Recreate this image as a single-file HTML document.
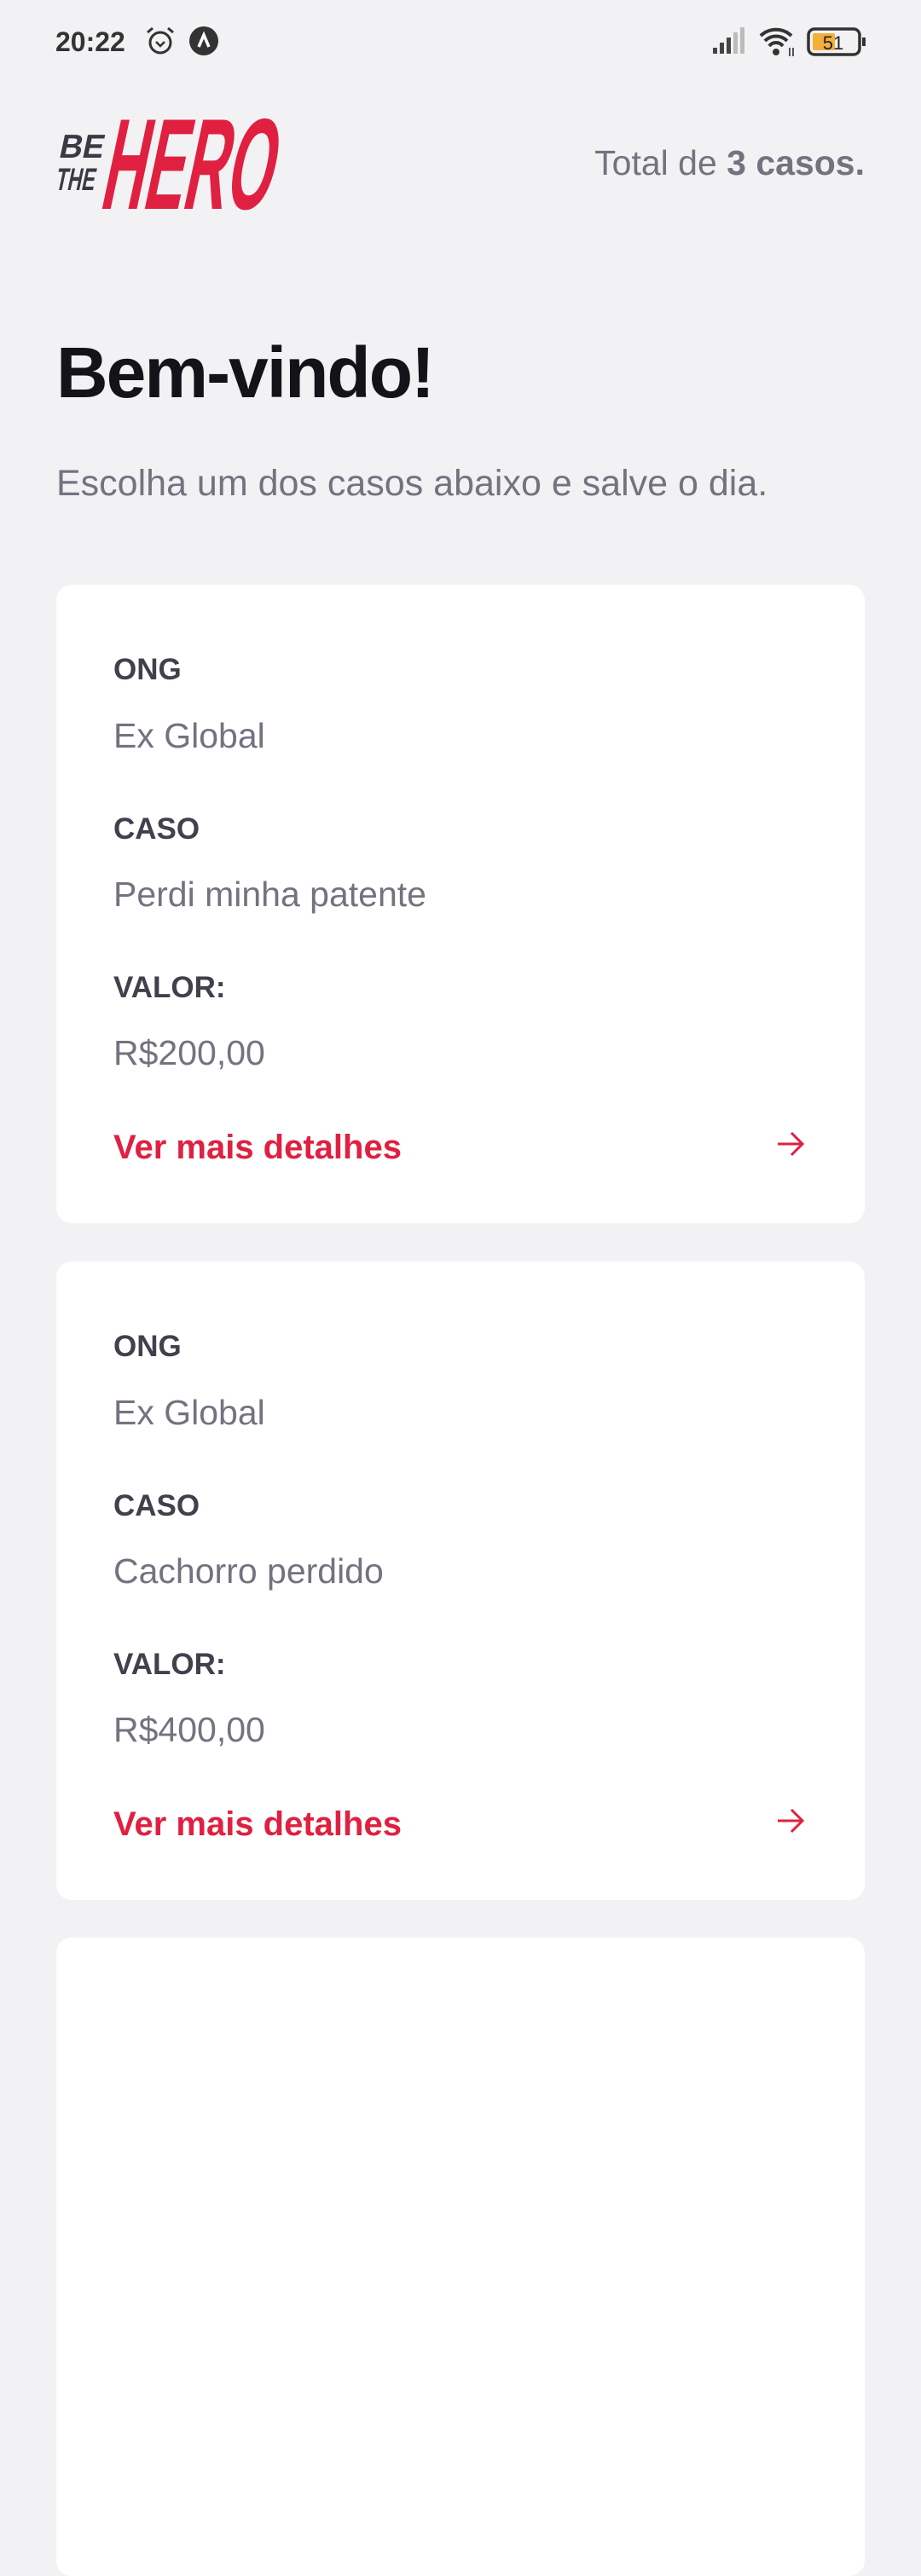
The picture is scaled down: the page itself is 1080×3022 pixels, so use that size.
<!DOCTYPE html>
<html><head><meta charset="utf-8"><style>
*{margin:0;padding:0;box-sizing:border-box}
body{width:1080px;height:2340px;background:#f2f2f4;font-family:"Liberation Sans",Roboto,sans-serif;position:relative;overflow:hidden}
.abs{position:absolute}
.card{position:absolute;left:66px;width:948px;height:749px;background:#fff;border-radius:18px}
.lbl{position:absolute;left:67px;font-size:35px;font-weight:bold;color:#41414d;line-height:1}
.val{position:absolute;left:67px;font-size:41px;color:#737380;line-height:1}
.more{position:absolute;left:67px;font-size:40px;font-weight:bold;color:#e02041;line-height:1}
</style></head><body>
<div class="abs" style="left:65px;top:31px;font-size:32px;font-weight:bold;color:#333;">20:22</div>
<svg class="abs" style="left:168px;top:28px" width="40" height="40" viewBox="0 0 40 40"><circle cx="20" cy="22" r="12" fill="none" stroke="#333" stroke-width="3"/><path d="M15 21l5 5 5-5" fill="none" stroke="#333" stroke-width="2.5"/><path d="M5 10l6-5M35 10l-6-5" stroke="#333" stroke-width="3"/></svg>
<svg class="abs" style="left:221px;top:30px" width="36" height="36" viewBox="0 0 36 36"><circle cx="18" cy="18" r="17" fill="#333"/><path d="M12 25l6-14 6 14" fill="none" stroke="#fff" stroke-width="3.5"/></svg>
<svg class="abs" style="left:834px;top:32px" width="42" height="32" viewBox="0 0 42 32"><rect x="2" y="24" width="5" height="7" fill="#444"/><rect x="10" y="18" width="5" height="13" fill="#444"/><rect x="18" y="12" width="5" height="19" fill="#444"/><rect x="26" y="6" width="5" height="25" fill="#bbb"/><rect x="34" y="0" width="5" height="31" fill="#bbb"/></svg>
<svg class="abs" style="left:888px;top:30px" width="48" height="38" viewBox="0 0 48 38"><path d="M4 12a26 26 0 0 1 36 0M9 18a18 18 0 0 1 26 0M14 24a10 10 0 0 1 16 0" fill="none" stroke="#333" stroke-width="4"/><circle cx="22" cy="31" r="4" fill="#333"/><path d="M38 26v10M42 26v10" stroke="#555" stroke-width="2"/></svg>
<svg class="abs" style="left:946px;top:32px" width="72" height="34" viewBox="0 0 72 34"><rect x="2" y="2" width="60" height="30" rx="7" fill="none" stroke="#333" stroke-width="3.5"/><rect x="7" y="7" width="26" height="20" rx="2" fill="#f2b03a"/><rect x="65" y="12" width="4" height="10" fill="#333"/><text x="31" y="26" font-size="22" font-family="Liberation Sans" fill="#222" text-anchor="middle">51</text></svg>

<svg class="abs" style="left:60px;top:128px" width="280" height="124" viewBox="0 0 280 124">
<g transform="skewX(-12)">
<text x="20" y="57" font-family="Liberation Sans" font-weight="bold" font-size="39" fill="#3a3a46" textLength="52" lengthAdjust="spacingAndGlyphs">BE</text>
<text x="24" y="95" font-family="Liberation Sans" font-weight="bold" font-size="37" fill="#3a3a46" textLength="46" lengthAdjust="spacingAndGlyphs">THE</text>
<text x="80" y="117" font-family="Liberation Sans" font-weight="bold" font-size="152" fill="#e02041" textLength="200" lengthAdjust="spacingAndGlyphs">HERO</text>
</g></svg>

<div class="abs" style="right:66px;top:168px;font-size:41px;color:#737380;">Total de <b>3 casos.</b></div>
<div class="abs" style="left:66px;top:389px;font-size:84px;font-weight:bold;color:#13131a;letter-spacing:-2px">Bem-vindo!</div>
<div class="abs" style="left:66px;top:543px;font-size:43px;color:#737380;">Escolha um dos casos abaixo e salve o dia.</div>

<div class="card" style="top:686px">
<div class="lbl" style="top:82px">ONG</div>
<div class="val" style="top:157px">Ex Global</div>
<div class="lbl" style="top:269px">CASO</div>
<div class="val" style="top:343px">Perdi minha patente</div>
<div class="lbl" style="top:455px">VALOR:</div>
<div class="val" style="top:529px">R$200,00</div>
<div class="more" style="top:640px">Ver mais detalhes</div>
<svg class="abs" style="left:843px;top:640px" width="36" height="32" viewBox="0 0 36 32"><path d="M3 16h29M19 3l13 13-13 13" fill="none" stroke="#e02041" stroke-width="3"/></svg>
</div>
<div class="card" style="top:1480px">
<div class="lbl" style="top:82px">ONG</div>
<div class="val" style="top:157px">Ex Global</div>
<div class="lbl" style="top:269px">CASO</div>
<div class="val" style="top:343px">Cachorro perdido</div>
<div class="lbl" style="top:455px">VALOR:</div>
<div class="val" style="top:529px">R$400,00</div>
<div class="more" style="top:640px">Ver mais detalhes</div>
<svg class="abs" style="left:843px;top:640px" width="36" height="32" viewBox="0 0 36 32"><path d="M3 16h29M19 3l13 13-13 13" fill="none" stroke="#e02041" stroke-width="3"/></svg>
</div>
<div class="card" style="top:2273px"></div>
</body></html>
